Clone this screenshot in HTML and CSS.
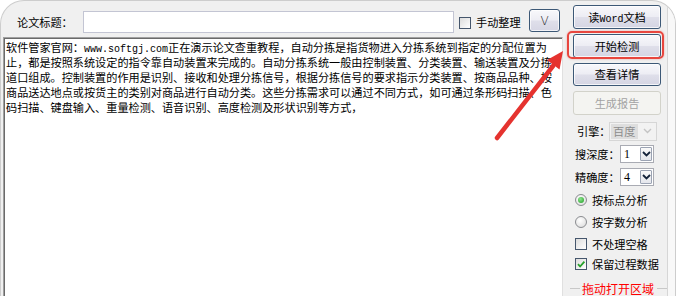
FILE: index.html
```html
<!DOCTYPE html>
<html lang="zh-CN">
<head>
<meta charset="utf-8">
<title>论文查重</title>
<link rel="stylesheet" href="styles.css">
</head>
<body>
<div class="window">
  <div class="left">
    <div class="toprow">
      <span class="lbl-title">论文标题：</span>
      <div class="input"></div>
      <span class="cb cb-top"></span>
      <span class="chk-lbl">手动整理</span>
      <span class="vbtn">V</span>
    </div>
    <div class="textarea">
      <div class="ln">软件管家官网：<span class="mono">www.softgj.com</span>正在演示论文查重教程，自动分拣是指货物进入分拣系统到指定的分配位置为</div>
      <div class="ln">止，都是按照系统设定的指令靠自动装置来完成的。自动分拣系统一般由控制装置、分类装置、输送装置及分拣</div>
      <div class="ln">道口组成。控制装置的作用是识别、接收和处理分拣信号，根据分拣信号的要求指示分类装置、按商品品种、按</div>
      <div class="ln">商品送达地点或按货主的类别对商品进行自动分类。这些分拣需求可以通过不同方式，如可通过条形码扫描、色</div>
      <div class="ln">码扫描、键盘输入、重量检测、语音识别、高度检测及形状识别等方式，</div>
    </div>
  </div>
  <div class="right">
    <div class="btn"><span>读<span class="mono-btn">Word</span>文档</span></div>
    <div class="btn hl">开始检测</div>
    <div class="btn">查看详情</div>
    <div class="btn dis">生成报告</div>
    <div class="opts">
      <div class="opt opt-engine">
        <span class="olbl w32">引擎：</span>
        <div class="sel sel-dis"><span class="val">百度</span><span class="dd dd-dis"><svg width="9" height="6" viewBox="0 0 9 6"><path d="M1 1l3.5 3.5L8 1" stroke="#c4c4c4" stroke-width="1.4" fill="none"/></svg></span></div>
      </div>
      <div class="opt opt-23">
        <span class="olbl w45">搜深度：</span>
        <div class="sel"><span class="val">1</span><span class="dd"><svg width="9" height="6" viewBox="0 0 9 6"><path d="M1 1l3.5 3.5L8 1" stroke="#14233a" stroke-width="1.8" fill="none"/></svg></span></div>
      </div>
      <div class="opt opt-23">
        <span class="olbl w45">精确度：</span>
        <div class="sel"><span class="val">4</span><span class="dd"><svg width="9" height="6" viewBox="0 0 9 6"><path d="M1 1l3.5 3.5L8 1" stroke="#14233a" stroke-width="1.8" fill="none"/></svg></span></div>
      </div>
      <div class="opt opt-23">
        <span class="radio"><span class="dot"></span></span>
        <span class="olbl-txt">按标点分析</span>
      </div>
      <div class="opt">
        <span class="radio"></span>
        <span class="olbl-txt">按字数分析</span>
      </div>
      <div class="opt">
        <span class="cb"></span>
        <span class="olbl-txt">不处理空格</span>
      </div>
      <div class="opt opt-18">
        <span class="cb"><svg width="10" height="10" viewBox="0 0 10 10"><path d="M2 5.2l2.1 2.3L8.4 2.6" stroke="#26a12a" stroke-width="1.8" fill="none"/></svg></span>
        <span class="olbl-txt">保留过程数据</span>
      </div>
      <div class="grp">
        <span class="gl"></span>
        <span class="gtxt">拖动打开区域</span>
        <span class="gl"></span>
      </div>
    </div>
  </div>
  <div class="edge"></div>
</div>
<svg class="arrow" width="676" height="296" viewBox="0 0 676 296">
  <line x1="497" y1="138" x2="553" y2="66" stroke="#e5332f" stroke-width="4.5" stroke-linecap="round"/>
  <polygon points="563,51 559.5,69.5 547,60" fill="#e5332f"/>
</svg>
</body>
</html>
```
FILE: styles.css
```css
* { box-sizing: border-box; margin: 0; padding: 0; }
html, body { background: #fff; }
body {
  position: relative;
  width: 676px;
  height: 296px;
  overflow: hidden;
  font-family: "Noto Sans CJK SC", "Noto Sans", sans-serif;
  font-size: 11.15px;
  color: #000;
}
.window {
  width: 676px;
  height: 296px;
  display: flex;
  padding-left: 2px;
  background: #f0f0f0;
  border: 1px solid #cdcdcd;
  border-bottom: none;
  border-radius: 24px 24px 0 0;
  overflow: hidden;
}
.left {
  width: 560px;
  display: flex;
  flex-direction: column;
}
.toprow {
  display: flex;
  align-items: center;
  height: 24px;
  margin: 9px 0 3px;
  padding-left: 14px;
}
.lbl-title { width: 66px; }
.input {
  width: 371px;
  height: 22px;
  background: #fff;
  border: 1px solid #c3c5d3;
}
.cb {
  width: 12px;
  height: 12px;
  flex: none;
  display: flex;
  align-items: center;
  justify-content: center;
  border: 1px solid #45566c;
  background: linear-gradient(135deg, #dcdcdc, #ffffff);
}
.cb-top { margin: 2px 0 0 5px; }
.chk-lbl { width: 44px; margin-left: 5px; white-space: nowrap; }
.vbtn {
  align-self: flex-start;
  margin: -1px 0 0 9px;
  width: 31px;
  height: 23px;
  display: flex;
  align-items: center;
  justify-content: center;
  border: 1px solid #3c5876;
  border-radius: 3px;
  background: linear-gradient(#f8f8fb 0%, #ededf4 48%, #dfdfea 52%, #d6d6e4 100%);
  box-shadow: inset 0 0 0 1px rgba(255,255,255,0.7);
  font-family: "DejaVu Sans", sans-serif;
  font-size: 12px;
  font-weight: 300;
  color: #222;
}
.textarea {
  flex: 1;
  background: #fff;
  border-top: 1px solid #a0a0a0;
  border-left: 1px solid #a0a0a0;
  border-right: 1px solid #e0e0e0;
  box-shadow: inset 1px 1px 0 #6a6a6a;
  padding: 2px 0 0 2px;
}
.ln {
  white-space: nowrap;
  line-height: 15px;
  height: 15px;
}
.mono {
  font-family: "Liberation Mono", monospace;
  font-size: 10px;
}
.right {
  width: 88px;
  margin-left: 10px;
  padding-top: 4px;
  display: flex;
  flex-direction: column;
}
.btn {
  position: relative;
  height: 27px;
  margin-bottom: 5px;
  display: flex;
  align-items: center;
  justify-content: center;
  border: 1px solid #3c5876;
  border-radius: 3px;
  background: linear-gradient(#f8f8fb 0%, #ededf4 48%, #dfdfea 52%, #d5d5e3 100%);
  box-shadow: inset 0 0 0 1px rgba(255,255,255,0.75);
  white-space: nowrap;
}
.mono-btn {
  font-family: "Liberation Mono", monospace;
  font-size: 10px;
}
.btn.hl::after {
  content: "";
  position: absolute;
  left: -7px;
  right: -4px;
  top: -4px;
  bottom: -2px;
  border: 2.5px solid #e8463e;
  border-radius: 5px;
  box-shadow: 0 0 2px rgba(232,70,62,0.5);
}
.btn.dis {
  border-color: #d2d2ca;
  background: #f4f4f1;
  box-shadow: none;
  color: #a3a3a3;
}
.opts {
  display: flex;
  flex-direction: column;
}
.opt {
  display: flex;
  align-items: center;
  height: 22px;
  padding-left: 2px;
  white-space: nowrap;
}
.opt-23 { height: 23px; }
.opt-18 { height: 18px; }
.opt-engine { padding-left: 4px; }
.olbl.w32 { width: 32px; }
.olbl.w45 { width: 45px; }
.sel {
  display: flex;
  width: 34px;
  height: 18px;
  border: 1px solid #a9abb3;
  background: #fff;
}
.sel .val {
  flex: 1;
  padding-left: 3px;
  font-family: "Liberation Serif", serif;
  font-size: 12px;
  line-height: 16px;
}
.dd {
  width: 12px;
  margin: 1px;
  display: flex;
  align-items: center;
  justify-content: center;
  border: 1px solid #9ba3b3;
  border-radius: 1px;
  background: linear-gradient(#fafafa, #e4e6ec);
}
.sel-dis {
  width: 48px;
  height: 19px;
  border-color: #d6d6d6;
  background: #f2f2f2;
}
.sel-dis .val {
  margin: 1px 0 1px 1px;
  padding-left: 2px;
  background: #dedede;
  color: #8c8c8c;
  font-family: "Noto Sans CJK SC", sans-serif;
  font-size: 11.15px;
  line-height: 15px;
}
.dd-dis {
  border: none;
  background: transparent;
  width: 16px;
}
.radio {
  width: 12px;
  height: 12px;
  flex: none;
  display: flex;
  align-items: center;
  justify-content: center;
  border-radius: 50%;
  border: 1px solid #8a8c90;
  background: radial-gradient(circle at 40% 35%, #ffffff, #d8d8d8);
}
.dot {
  width: 6px;
  height: 6px;
  border-radius: 50%;
  background: radial-gradient(circle at 40% 35%, #8ee68e, #1d9a22);
}
.olbl-txt { margin-left: 5px; }
.grp {
  display: flex;
  align-items: center;
  height: 16px;
  margin: 7px 0 0 -3px;
  color: #ff0000;
  font-size: 12px;
  white-space: nowrap;
}
.gl {
  width: 10px;
  height: 1px;
  flex: none;
  background: #c8c8c8;
}
.gtxt { margin: 0 3px 0 2px; }
.edge {
  flex: 1;
  margin-left: 6px;
  background: #f8f8f8;
  border-left: 1px solid #d6d6d6;
}
.arrow {
  position: absolute;
  left: 0;
  top: 0;
  pointer-events: none;
}
```
